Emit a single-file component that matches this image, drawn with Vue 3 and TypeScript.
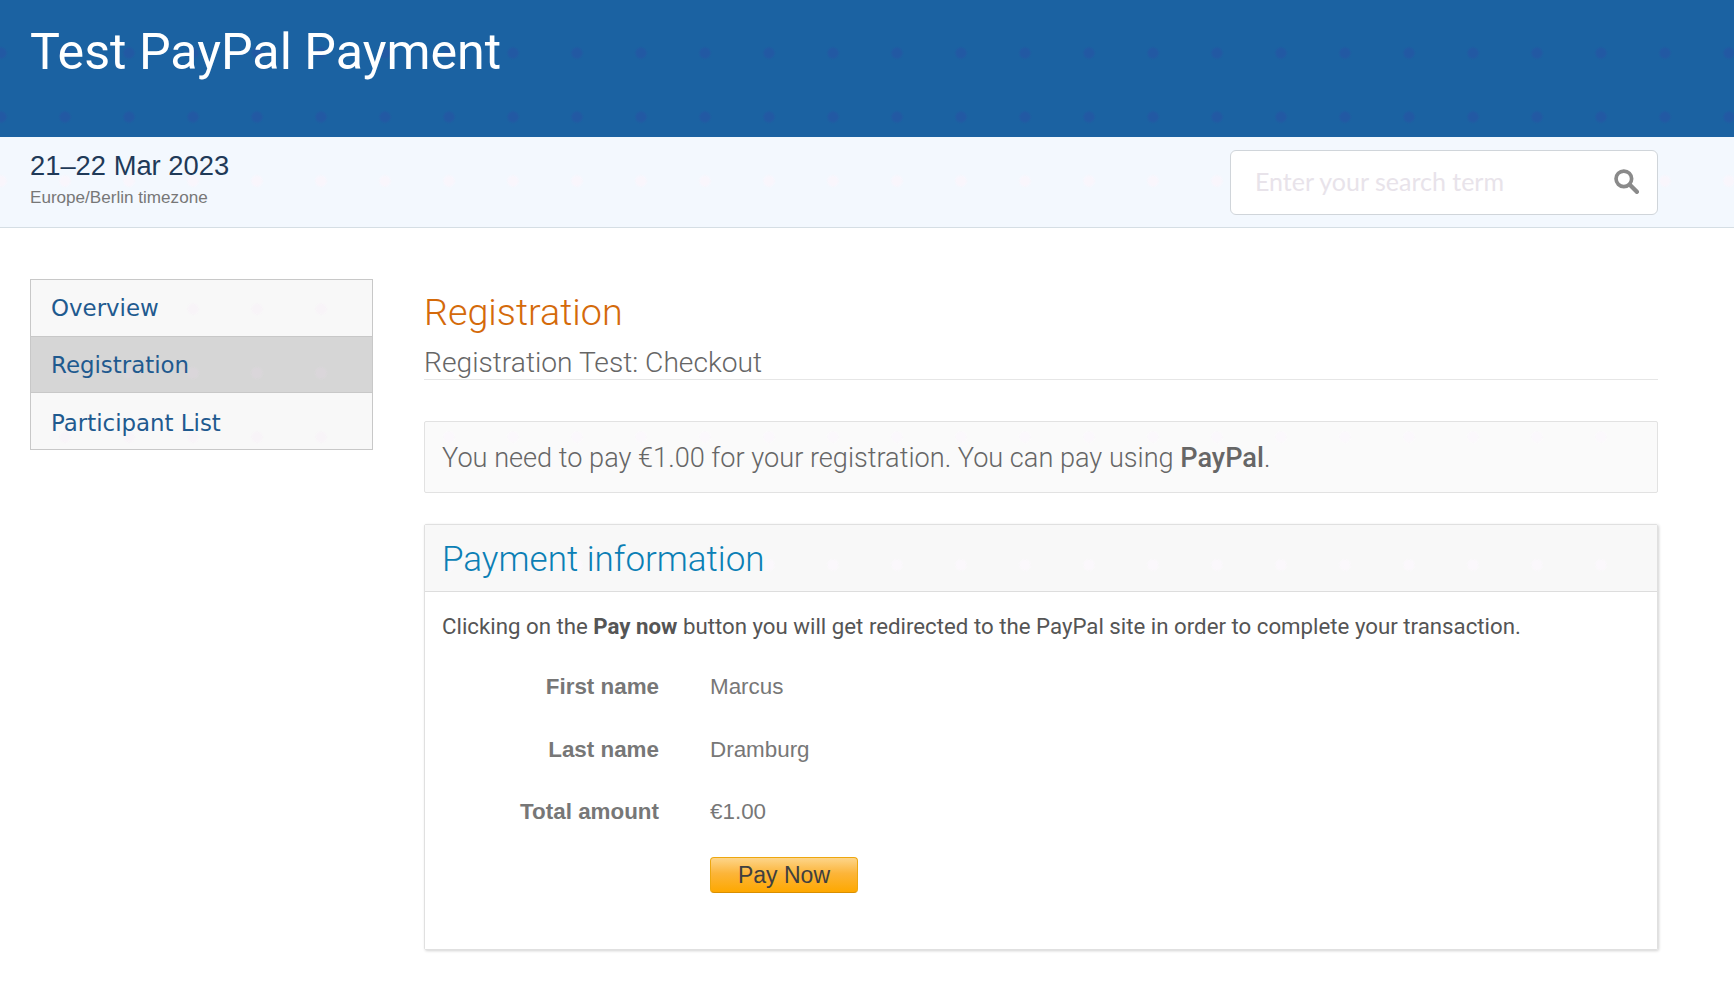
<template>
  <div class="page">
    <header class="event-header dots">
      <h1 class="event-title">Test PayPal Payment</h1>
    </header>
    <div class="event-sub dots">
      <div class="event-when">
        <div class="event-date">21–22 Mar 2023</div>
        <div class="event-tz">Europe/Berlin timezone</div>
      </div>
      <div class="search-box">
        <input class="search-input" type="text" placeholder="Enter your search term" />
        <svg class="search-icon" viewBox="0 0 24 24" aria-hidden="true">
          <circle cx="10" cy="10" r="7.2" fill="none" stroke="#8a8a8a" stroke-width="3.4" />
          <path d="M15.5 15.5L22 22" stroke="#8a8a8a" stroke-width="4" stroke-linecap="round" />
        </svg>
      </div>
    </div>

    <div class="main">
      <nav class="side-menu">
        <a
          v-for="item in menuItems"
          :key="item"
          :class="['menu-item', 'dots', { active: item === 'Registration' }]"
        >
          {{ item }}
        </a>
      </nav>

      <section class="content">
        <h2 class="page-title">Registration</h2>
        <h3 class="page-sub">Registration Test: Checkout</h3>

        <div class="notice dots">
          You need to pay €1.00 for your registration. You can pay using <strong>PayPal</strong>.
        </div>

        <div class="panel">
          <div class="panel-head dots">Payment information</div>
          <div class="panel-body">
            <p class="intro">
              Clicking on the <strong>Pay now</strong> button you will get redirected to the PayPal site in order to complete your transaction.
            </p>
            <dl class="info">
              <template v-for="row in paymentRows" :key="row.label">
                <dt>{{ row.label }}</dt>
                <dd>{{ row.value }}</dd>
              </template>
            </dl>
            <div class="pay-row">
              <button class="pay-btn">Pay Now</button>
            </div>
          </div>
        </div>
      </section>
    </div>
  </div>
</template>

<script setup lang="ts">
const menuItems: string[] = ['Overview', 'Registration', 'Participant List'];

const paymentRows: { label: string; value: string }[] = [
  { label: 'First name', value: 'Marcus' },
  { label: 'Last name', value: 'Dramburg' },
  { label: 'Total amount', value: '€1.00' }
];
</script>

<style>
body {
  background: #fff;
}
</style>

<style scoped>
.page {
  min-height: 1000px;
  font-family: "Liberation Sans", Arial, sans-serif;
  color: #555;
}

/* faint dot grid, same raster across the whole page */
.dots {
  --dot: #fbf8fc;
  background-image: radial-gradient(circle, var(--dot) 4px, transparent 7px);
  background-size: 64px 64px;
  background-position: -31px 21px;
  background-attachment: fixed;
}

.event-header {
  --dot: #2259a3;
  height: 137px;
  box-sizing: border-box;
  padding: 21px 30px 0;
  background-color: #1b62a2;
}

.event-title {
  margin: 0;
  font-family: Roboto, sans-serif;
  font-weight: 400;
  font-size: 50.2px;
  line-height: 62px;
  color: #fff;
}

.event-sub {
  --dot: #f9f6fc;
  height: 91px;
  box-sizing: border-box;
  display: flex;
  justify-content: space-between;
  align-items: flex-start;
  padding: 13px 76px 0 30px;
  background-color: #f3f8fe;
  border-bottom: 1px solid #d5dee4;
}

.event-date {
  font-size: 27.35px;
  line-height: 32px;
  color: #1f3a58;
}

.event-tz {
  margin-top: 5px;
  font-size: 17.1px;
  line-height: 22px;
  color: #777;
}

.search-box {
  width: 428px;
  height: 65px;
  box-sizing: border-box;
  display: flex;
  align-items: center;
  padding: 0 18px 3px 24px;
  background: #fff;
  border: 1px solid #d0d5da;
  border-radius: 6px;
}

.search-input {
  flex: 1;
  min-width: 0;
  border: none;
  outline: none;
  padding: 0;
  background: transparent;
  font-family: Lato, sans-serif;
  font-size: 25px;
}

.search-input::placeholder {
  color: #e8e3ea;
}

.search-icon {
  width: 26px;
  height: 26px;
}

.main {
  display: flex;
  align-items: flex-start;
  gap: 51px;
  padding: 51px 76px 0 30px;
}

.side-menu {
  flex: 0 0 343px;
  box-sizing: border-box;
  border: 1px solid #c8c8c8;
}

.menu-item {
  --dot: #f8f4f8;
  display: block;
  height: 56px;
  box-sizing: border-box;
  padding-left: 20px;
  font-family: "DejaVu Sans", Verdana, sans-serif;
  font-size: 22.9px;
  line-height: 57px;
  color: #1f5a8f;
  background-color: #f8f8f8;
}

.menu-item:last-child {
  line-height: 60px;
}

.menu-item.active {
  --dot: #dad6da;
  height: 57px;
  background-color: #d6d6d6;
  border-top: 1px solid #c8c8c8;
  border-bottom: 1px solid #c8c8c8;
  line-height: 57px;
}

.content {
  flex: 1;
  min-width: 0;
}

.page-title {
  margin: 0;
  font-family: Roboto, sans-serif;
  font-weight: 300;
  font-size: 37.7px;
  line-height: 46px;
  padding-top: 10px;
  color: #d46a0a;
}

.page-sub {
  margin: 0;
  padding: 13px 0 1px;
  font-family: Roboto, sans-serif;
  font-weight: 300;
  font-size: 28.2px;
  line-height: 30px;
  color: #666;
  border-bottom: 1px solid #e6e6e6;
}

.notice {
  margin-top: 41px;
  height: 72px;
  box-sizing: border-box;
  padding: 2px 17px 0;
  font-family: Roboto, sans-serif;
  font-weight: 300;
  font-size: 27.15px;
  line-height: 69px;
  color: #666;
  background-color: #fafafa;
  border: 1px solid #e2e2e2;
  border-radius: 2px;
}

.notice strong {
  font-weight: 500;
}

.panel {
  margin-top: 31px;
  border: 1px solid #e0e0e0;
  border-radius: 2px;
  box-shadow: 1px 1px 3px rgba(0, 0, 0, 0.18);
}

.panel-head {
  height: 67px;
  box-sizing: border-box;
  padding: 3px 17px 0;
  font-family: Roboto, sans-serif;
  font-weight: 300;
  font-size: 35px;
  line-height: 64px;
  color: #0b7fb5;
  background-color: #f8f8f8;
  border-bottom: 1px solid #ddd;
}

.panel-body {
  height: 357px;
  box-sizing: border-box;
  padding: 0 17px;
  background: #fff;
}

.intro {
  margin: 0;
  padding-top: 20px;
  font-family: Roboto, sans-serif;
  font-size: 22.25px;
  line-height: 28px;
  color: #555;
}

.intro strong {
  font-weight: 700;
}

.info {
  display: grid;
  grid-template-columns: 217px 1fr;
  column-gap: 51px;
  row-gap: 34.5px;
  margin: 33px 0 0;
  font-size: 22.4px;
  line-height: 28px;
  color: #777;
}

.info dt {
  text-align: right;
  font-weight: 700;
}

.info dd {
  margin: 0;
}

.pay-row {
  margin-top: 31px;
  padding-left: 268px;
}

.pay-btn {
  display: block;
  width: 148px;
  height: 36px;
  padding: 0;
  font-family: "Liberation Sans", Arial, sans-serif;
  font-size: 23px;
  color: #3f3f3f;
  background: linear-gradient(#fdd58a, #fcb53a 45%, #fea800);
  border: 1px solid #eda70f;
  border-bottom-color: #d98f00;
  border-radius: 4px;
}
</style>
